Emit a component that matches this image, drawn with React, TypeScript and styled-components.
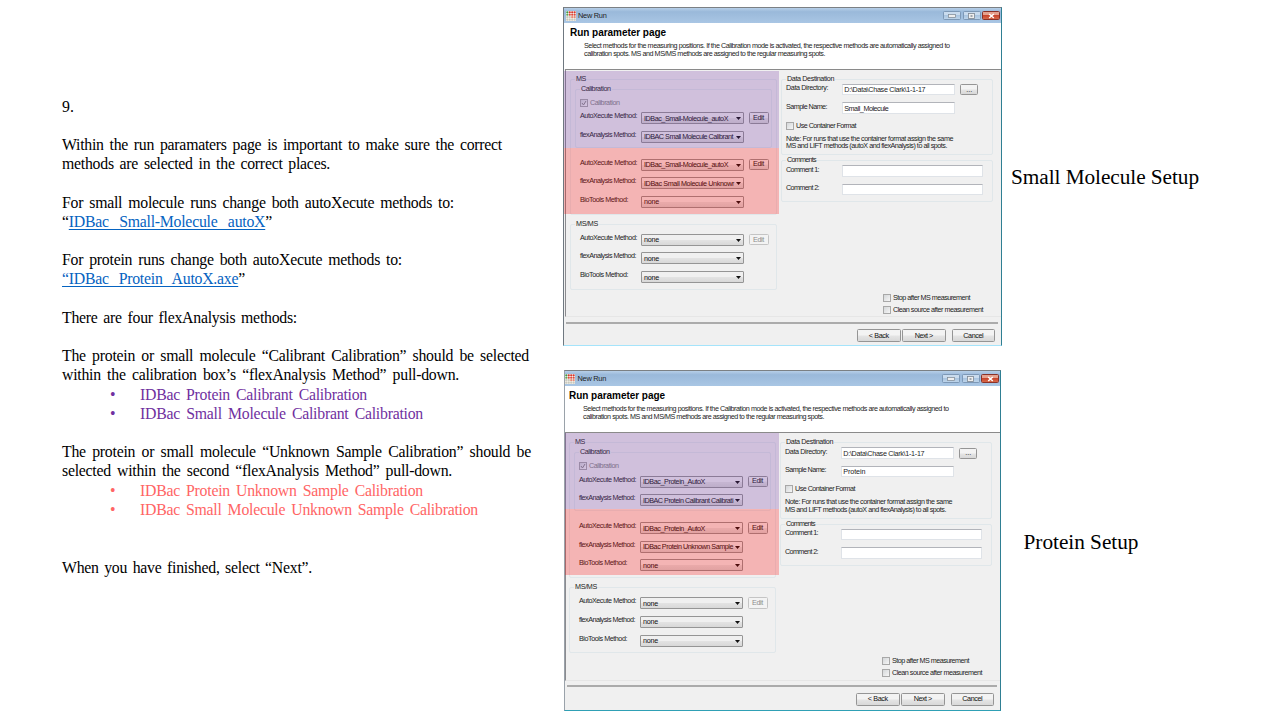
import React, { useLayoutEffect, useRef, useState } from "react";
import styled, { createGlobalStyle } from "styled-components";

const GlobalStyle = createGlobalStyle`
  * { box-sizing: border-box; }
  body { margin: 0; background: #fff; overflow: hidden; }
`;

/* ---------- text that is set to a given measure ---------- */

const FitSpan = styled.span`
  display: inline-block;
  white-space: pre;
`;

type FitProps = { w: number; by?: "letter" | "word"; children: React.ReactNode };

const PROSE_TRACKING = -0.25;

function Fit({ w, by = "letter", children }: FitProps) {
  const ref = useRef<HTMLSpanElement>(null);
  const [spacing, setSpacing] = useState(0);
  useLayoutEffect(() => {
    const el = ref.current;
    if (!el) return;
    el.style.letterSpacing = by === "word" ? `${PROSE_TRACKING}px` : "0px";
    el.style.wordSpacing = "0px";
    const text = el.textContent ?? "";
    const n = by === "word" ? text.split(" ").length - 1 : text.length;
    const value = (w - el.getBoundingClientRect().width) / Math.max(1, n);
    el.style[by === "word" ? "wordSpacing" : "letterSpacing"] = `${value}px`;
    setSpacing(value);
  }, [w, by]);
  return (
    <FitSpan
      ref={ref}
      style={by === "word" ? { wordSpacing: spacing, letterSpacing: PROSE_TRACKING } : { letterSpacing: spacing }}
    >
      {children}
    </FitSpan>
  );
}

/* ---------- slide ---------- */

const Slide = styled.main`
  width: 1280px;
  height: 720px;
  display: flex;
  background: #fff;
  overflow: hidden;
`;

const Instructions = styled.section`
  width: 563px;
  flex: none;
  padding: 97px 0 0 62px;
  font-family: "Liberation Serif", "Times New Roman", serif;
  font-size: 15.8px;
  line-height: 19.17px;
  color: #000;
`;

const Paragraph = styled.p<{ $after?: number }>`
  margin: 0 0 ${(p) => (p.$after ?? 1) * 19.17}px;
`;

const Line = styled.span`
  display: block;
  height: 19.17px;
  white-space: nowrap;
`;

const Link = styled.a`
  color: #0563c1;
  text-decoration: underline;
  text-decoration-thickness: 1px;
  text-underline-offset: 2px;
`;

const Bullets = styled.ul<{ $color: string }>`
  list-style: none;
  margin: 0;
  padding: 0.4px 0 0 48px;
  color: ${(p) => p.$color};
`;

const Bullet = styled.li`
  display: flex;
  height: 19.17px;
  white-space: nowrap;
  &::before {
    content: "•";
    width: 30px;
    flex: none;
  }
`;

const Shots = styled.section`
  width: 439px;
  flex: none;
  display: flex;
  flex-direction: column;
  padding-top: 7px;
  gap: 24px;
`;

const Captions = styled.section`
  flex: 1;
  font-family: "Liberation Serif", "Times New Roman", serif;
  font-size: 21.3px;
  line-height: 26px;
  color: #000;
`;

const Caption = styled.h2<{ $top: number; $left: number }>`
  margin: ${(p) => p.$top}px 0 0 ${(p) => p.$left}px;
  font: inherit;
`;

/* ---------- dialog window ---------- */

const Window = styled.article<{ $second: boolean }>`
  width: ${(p) => (p.$second ? 437 : 439)}px;
  height: ${(p) => (p.$second ? 341 : 339)}px;
  margin-left: ${(p) => (p.$second ? 1 : 0)}px;
  position: relative;
  overflow: hidden;
  background: #f0f0f0;
  border-top: 1px solid #7b8084;
  border-right: 1px solid #2f7f93;
  border-bottom: 1px solid ${(p) => (p.$second ? "#2fa0b5" : "#a5e4fb")};
  border-left: 1px solid ${(p) => (p.$second ? "#9aa2aa" : "#6f7880")};
  font-family: "Liberation Sans", Arial, sans-serif;
  font-size: 7.2px;
  line-height: 8px;
  color: #1c1c1c;
`;

const TitleBar = styled.header<{ $second: boolean }>`
  height: 15px;
  display: flex;
  align-items: center;
  padding: 0 1px 0 ${(p) => (p.$second ? 0 : 1.5)}px;
  background: linear-gradient(180deg, #b7cfe8 0, #9ab9da 25%, #a9c6e4 100%);
  font-size: 7.4px;
`;

const TitleText = styled.span`
  flex: 1;
  padding-left: 2.5px;
`;

const WindowButtons = styled.div`
  display: flex;
  gap: 1.3px;
`;

const WindowButton = styled.span<{ $close?: boolean }>`
  width: 18px;
  height: 9.5px;
  display: flex;
  align-items: center;
  justify-content: center;
  border: 1px solid ${(p) => (p.$close ? "#8a3228" : "#7d98b6")};
  border-radius: 1.5px;
  background: ${(p) =>
    p.$close
      ? "linear-gradient(180deg,#e5a18e 0 40%,#c9452c 50%,#d6694a)"
      : "linear-gradient(180deg,#c9dbee 0 45%,#aac5e1 50%,#bdd4ea)"};
`;

const Heading = styled.section<{ $second: boolean }>`
  height: ${(p) => (p.$second ? 46 : 46)}px;
  padding: 4px 0 0 ${(p) => (p.$second ? 4 : 6)}px;
  background: #fff;
`;

const HeadingTitle = styled.h1`
  margin: 0;
  font-size: 10px;
  line-height: 12px;
  font-weight: bold;
  color: #000;
`;

const HeadingText = styled.p`
  margin: 3.4px 0 0 14px;
  line-height: 7.7px;
`;

const Body = styled.section<{ $second: boolean }>`
  height: ${(p) => (p.$second ? 249 : 248)}px;
  display: flex;
  margin-left: ${(p) => (p.$second ? 0 : 1)}px;
  border-top: 1px solid #8a8a8a;
  border-left: 1px solid #8b8b8f;
  border-bottom: 1px solid #e6e6e6;
`;

const LeftPane = styled.div<{ $second: boolean }>`
  width: 217px;
  flex: none;
  padding: ${(p) => (p.$second ? 9 : 8.5)}px 0 0 ${(p) => (p.$second ? 3 : 4)}px;
`;

const RightPane = styled.div<{ $second: boolean }>`
  flex: none;
  width: 213px;
  margin-left: ${(p) => (p.$second ? -3 : -2)}px;
  padding-top: ${(p) => (p.$second ? 9 : 8.5)}px;
  display: flex;
  flex-direction: column;
`;

const Group = styled.div<{ $w: number; $h: number }>`
  width: ${(p) => p.$w}px;
  height: ${(p) => p.$h}px;
  padding-left: 4px;
  border: 1px solid #e0e7ea;
  border-radius: 2px;
`;

const Legend = styled.div`
  width: fit-content;
  height: 8px;
  margin-top: -5px;
  padding: 0 1px;
  background: #f0f0f0;
`;

const NestedGroup = styled(Group)`
  margin-top: 6px;
`;

const CheckLine = styled.div<{ $off?: boolean }>`
  height: 8px;
  display: flex;
  align-items: center;
  gap: 2px;
  color: ${(p) => (p.$off ? "#858585" : "inherit")};
`;

const Box = styled.span`
  width: 8px;
  height: 8px;
  display: flex;
  border: 1px solid #a8a8a8;
  background: linear-gradient(135deg, #d4d7d9, #f6f6f6);
`;

const MethodRow = styled.div`
  height: 18.7px;
  display: flex;
  align-items: flex-start;
`;

const Label = styled.span<{ $w: number }>`
  width: ${(p) => p.$w}px;
  flex: none;
  white-space: nowrap;
`;

const Select = styled.span`
  width: 103px;
  height: 12px;
  flex: none;
  display: flex;
  align-items: center;
  justify-content: space-between;
  padding: 1px 2px 0 2px;
  border: 1px solid #959595;
  border-radius: 1px;
  background: linear-gradient(180deg, #f0f0f0 0 45%, #e2e2e2 55%, #d8d8d8);
  color: #111;
`;

const PushButton = styled.span<{ $w: number; $h: number; $off?: boolean }>`
  width: ${(p) => p.$w}px;
  height: ${(p) => p.$h}px;
  flex: none;
  display: flex;
  align-items: center;
  justify-content: center;
  border: 1px solid ${(p) => (p.$off ? "#c4c4c4" : "#959595")};
  border-radius: 1.5px;
  background: ${(p) => (p.$off ? "#f3f3f3" : "linear-gradient(180deg,#f3f3f3 0 45%,#e4e4e4 55%,#d8d8d8)")};
  color: ${(p) => (p.$off ? "#8d8d8d" : "#111")};
`;

const Methods = styled.div<{ $top: number; $left?: number }>`
  padding: ${(p) => p.$top}px 0 0 ${(p) => p.$left ?? 0}px;
  ${Select} { margin-right: 4.5px; }
`;

const Field = styled.div`
  height: 18.7px;
  display: flex;
  align-items: flex-start;
`;

const Input = styled.span<{ $w: number }>`
  width: ${(p) => p.$w}px;
  height: 11.5px;
  margin: -0.5px 5.5px 0 0;
  padding: 1.5px 1px 0;
  background: #fff;
  border: 1px solid #dfe3e8;
  border-top-color: #b2b4ba;
  flex: none;
`;

const Note = styled.p`
  margin: 5px 0 0;
  line-height: 7.6px;
`;

const Options = styled.div`
  padding-left: 102px;
  margin-top: 91.8px;
  display: flex;
  flex-direction: column;
  gap: 3.8px;
`;

const Footer = styled.footer<{ $second: boolean }>`
  margin: ${(p) => (p.$second ? 4 : 4.5)}px 3px 0 2px;
  padding: 5.5px 3px 0 0;
  border-top: 2px solid #ababab;
  display: flex;
  justify-content: flex-end;
  gap: 1.5px;
`;

const Gap = styled.span`
  width: 3px;
`;

/* Tinted marker laid over a part of the dialog. */
const Marker = styled.div<{ $top: number; $h: number; $w: number; $color: string }>`
  position: absolute;
  left: 0;
  top: ${(p) => p.$top}px;
  width: ${(p) => p.$w}px;
  height: ${(p) => p.$h}px;
  background: ${(p) => p.$color};
`;

const AppIcon = () => (
  <svg width="10" height="10" viewBox="0 0 10 10">
    <rect width="10" height="10" fill="#f4f1ea" />
    {[0, 1, 2, 3].map((c) =>
      [0, 1, 2, 3].map((r) => (
        <circle
          key={`${c}${r}`}
          cx={1.3 + c * 2.45}
          cy={1.3 + r * 2.45}
          r="1.1"
          fill={r === 0 ? (c === 0 ? "#3c9a45" : "#d8352c") : r === 1 ? (c < 1 ? "#57a855" : "#e0473b") : r === 2 && c > 1 ? "#e88a76" : "#c9c9bd"}
        />
      ))
    )}
  </svg>
);

const Arrow = () => (
  <svg width="5" height="3" viewBox="0 0 5 3">
    <path d="M0 0h5L2.5 3z" fill="#111" />
  </svg>
);

const Tick = () => (
  <svg width="6" height="6" viewBox="0 0 6 6">
    <path d="M1 3l1.5 2L5 1" fill="none" stroke="#8a8a8a" />
  </svg>
);

const labelWidths: Record<string, number> = {
  "AutoXecute Method:": 57,
  "flexAnalysis Method:": 56,
  "BioTools Method:": 48,
};

type MethodProps = { label: string; value: string; w: number; edit?: "on" | "off" };

const Method = ({ label, value, w, edit }: MethodProps) => (
  <MethodRow>
    <Label $w={61}>
      <Fit w={labelWidths[label]}>{label}</Fit>
    </Label>
    <Select>
      <Fit w={w}>{value}</Fit>
      <Arrow />
    </Select>
    {edit && (
      <PushButton $w={20} $h={11.5} $off={edit === "off"}>
        <Fit w={11}>Edit</Fit>
      </PushButton>
    )}
  </MethodRow>
);

type Value = { text: string; w: number };
type RunDialogProps = { second?: boolean; auto: Value; calibrant: Value; unknown: Value; sample: Value };

const RunDialog = ({ second = false, auto, calibrant, unknown, sample }: RunDialogProps) => (
  <Window $second={second}>
    <TitleBar $second={second}>
      <AppIcon />
      <TitleText>
        <Fit w={28.5}>New Run</Fit>
      </TitleText>
      <WindowButtons>
        <WindowButton>
          <svg width="8" height="4" viewBox="0 0 8 4"><rect x=".5" y=".5" width="7" height="3" fill="#eee" stroke="#7d8792" strokeWidth=".7" /></svg>
        </WindowButton>
        <WindowButton>
          <svg width="7" height="6" viewBox="0 0 7 6"><rect x=".5" y=".5" width="6" height="5" fill="#eee" stroke="#7d8792" strokeWidth=".8" /><rect x="2.5" y="2.3" width="2" height="1.4" fill="#7d8792" /></svg>
        </WindowButton>
        <WindowButton $close>
          <svg width="7" height="6" viewBox="0 0 7 6"><path d="M1.2 1l4.6 4M5.8 1L1.2 5" stroke="#fff" strokeWidth="1.4" /></svg>
        </WindowButton>
      </WindowButtons>
    </TitleBar>
    <Heading $second={second}>
      <HeadingTitle><Fit w={96}>Run parameter page</Fit></HeadingTitle>
      <HeadingText>
        <Fit w={365.5}>Select methods for the measuring positions. If the Calibration mode is activated, the respective methods are automatically assigned to</Fit>
        <br />
        <Fit w={241}>calibration spots. MS and MS/MS methods are assigned to the regular measuring spots.</Fit>
      </HeadingText>
    </Heading>
    <Body $second={second}>
      <LeftPane $second={second}>
        <Group $w={207} $h={136}>
          <Legend><Fit w={10}>MS</Fit></Legend>
          <NestedGroup $w={197} $h={59}>
            <Legend><Fit w={29.5}>Calibration</Fit></Legend>
            <Methods $top={6}>
              <CheckLine $off>
                <Box><Tick /></Box>
                <Fit w={29.5}>Calibration</Fit>
              </CheckLine>
            </Methods>
            <Methods $top={5.5}>
              <Method label="AutoXecute Method:" value={auto.text} w={auto.w} edit="on" />
              <Method label="flexAnalysis Method:" value={calibrant.text} w={calibrant.w} />
            </Methods>
          </NestedGroup>
          <Methods $top={11} $left={5}>
            <Method label="AutoXecute Method:" value={auto.text} w={auto.w} edit="on" />
            <Method label="flexAnalysis Method:" value={unknown.text} w={unknown.w} />
            <Method label="BioTools Method:" value="none" w={15} />
          </Methods>
        </Group>
        <Methods $top={9}>
          <Group $w={207} $h={66}>
            <Legend><Fit w={22}>MS/MS</Fit></Legend>
            <Methods $top={6.3} $left={5}>
              <Method label="AutoXecute Method:" value="none" w={15} edit="off" />
              <Method label="flexAnalysis Method:" value="none" w={15} />
              <Method label="BioTools Method:" value="none" w={15} />
            </Methods>
          </Group>
        </Methods>
      </LeftPane>
      <RightPane $second={second}>
        <Group $w={211.5} $h={76.5}>
          <Legend><Fit w={47}>Data Destination</Fit></Legend>
          <Methods $top={1.8}>
            <Field>
              <Label $w={56.3}><Fit w={42}>Data Directory:</Fit></Label>
              <Input $w={112.5}><Fit w={81}>D:\Data\Chase Clark\1-1-17</Fit></Input>
              <PushButton $w={18} $h={11}>...</PushButton>
            </Field>
            <Field>
              <Label $w={56.3}><Fit w={41}>Sample Name:</Fit></Label>
              <Input $w={112.5}><Fit w={sample.w}>{sample.text}</Fit></Input>
            </Field>
            <CheckLine>
              <Box />
              <Fit w={60}>Use Container Format</Fit>
            </CheckLine>
          </Methods>
          <Note>
            <Fit w={167}>Note: For runs that use the container format assign the same</Fit>
            <br />
            <Fit w={161}>MS and LIFT methods (autoX and flexAnalysis) to all spots.</Fit>
          </Note>
        </Group>
        <Methods $top={5}>
          <Group $w={211.5} $h={42}>
            <Legend><Fit w={29}>Comments</Fit></Legend>
            <Methods $top={1.8}>
              <Field>
                <Label $w={56.3}><Fit w={33}>Comment 1:</Fit></Label>
                <Input $w={141} />
              </Field>
              <Field>
                <Label $w={56.3}><Fit w={33}>Comment 2:</Fit></Label>
                <Input $w={141} />
              </Field>
            </Methods>
          </Group>
        </Methods>
        <Options>
          <CheckLine><Box /><Fit w={77}>Stop after MS measurement</Fit></CheckLine>
          <CheckLine><Box /><Fit w={90}>Clean source after measurement</Fit></CheckLine>
        </Options>
      </RightPane>
    </Body>
    <Footer $second={second}>
      <PushButton $w={43.5} $h={13}><Fit w={20}>&lt; Back</Fit></PushButton>
      <PushButton $w={43.5} $h={13}><Fit w={18}>Next &gt;</Fit></PushButton>
      <Gap />
      <PushButton $w={43.5} $h={13}><Fit w={20}>Cancel</Fit></PushButton>
    </Footer>
    <Marker $top={second ? 61.5 : 62.5} $h={second ? 76.5 : 77.5} $w={second ? 214 : 215} $color="rgba(112,48,160,0.25)" />
    <Marker $top={second ? 138 : 140} $h={66} $w={second ? 214 : 215} $color="rgba(255,0,0,0.25)" />
  </Window>
);

const T = ({ w, children }: { w: number; children: React.ReactNode }) => (
  <Line>
    <Fit w={w} by="word">{children}</Fit>
  </Line>
);

export default function App() {
  return (
    <>
      <GlobalStyle />
      <Slide>
        <Instructions>
          <Paragraph>9.</Paragraph>
          <Paragraph>
            <T w={440}>Within the run paramaters page is important to make sure the correct</T>
            <T w={268}>methods are selected in the correct places.</T>
          </Paragraph>
          <Paragraph>
            <T w={392}>For small molecule runs change both autoXecute methods to:</T>
            <T w={210}>“<Link>IDBac Small-Molecule autoX</Link>”</T>
          </Paragraph>
          <Paragraph>
            <T w={340}>For protein runs change both autoXecute methods to:</T>
            <T w={183}><Link>“IDBac Protein AutoX.axe</Link>”</T>
          </Paragraph>
          <Paragraph>
            <T w={235}>There are four flexAnalysis methods:</T>
          </Paragraph>
          <Paragraph $after={0}>
            <T w={467}>The protein or small molecule “Calibrant Calibration” should be selected</T>
            <T w={397}>within the calibration box’s “flexAnalysis Method” pull-down.</T>
          </Paragraph>
          <Bullets $color="#7030a0">
            <Bullet><Fit w={227} by="word">IDBac Protein Calibrant Calibration</Fit></Bullet>
            <Bullet><Fit w={283} by="word">IDBac Small Molecule Calibrant Calibration</Fit></Bullet>
          </Bullets>
          <Paragraph $after={0}><Line /></Paragraph>
          <Paragraph $after={0}>
            <T w={469}>The protein or small molecule “Unknown Sample Calibration” should be</T>
            <T w={390}>selected within the second “flexAnalysis Method” pull-down.</T>
          </Paragraph>
          <Bullets $color="#ff6565">
            <Bullet><Fit w={283} by="word">IDBac Protein Unknown Sample Calibration</Fit></Bullet>
            <Bullet><Fit w={338} by="word">IDBac Small Molecule Unknown Sample Calibration</Fit></Bullet>
          </Bullets>
          <Paragraph><Line /></Paragraph>
          <Paragraph>
            <T w={250}>When you have finished, select “Next”.</T>
          </Paragraph>
        </Instructions>
        <Shots>
          <RunDialog
            auto={{ text: "IDBac_Small-Molecule_autoX", w: 84 }}
            calibrant={{ text: "IDBAC Small Molecule Calibrant", w: 89 }}
            unknown={{ text: "IDBac Small Molecule Unknowr", w: 90 }}
            sample={{ text: "Small_Molecule", w: 44 }}
          />
          <RunDialog
            second
            auto={{ text: "IDBac_Protein_AutoX", w: 62 }}
            calibrant={{ text: "IDBAC Protein Calibrant Calibrati", w: 90 }}
            unknown={{ text: "IDBac Protein Unknown Sample", w: 90 }}
            sample={{ text: "Protein", w: 22 }}
          />
        </Shots>
        <Captions>
          <Caption $top={164} $left={9}><Fit w={188}>Small Molecule Setup</Fit></Caption>
          <Caption $top={339} $left={21.5}><Fit w={115}>Protein Setup</Fit></Caption>
        </Captions>
      </Slide>
    </>
  );
}
